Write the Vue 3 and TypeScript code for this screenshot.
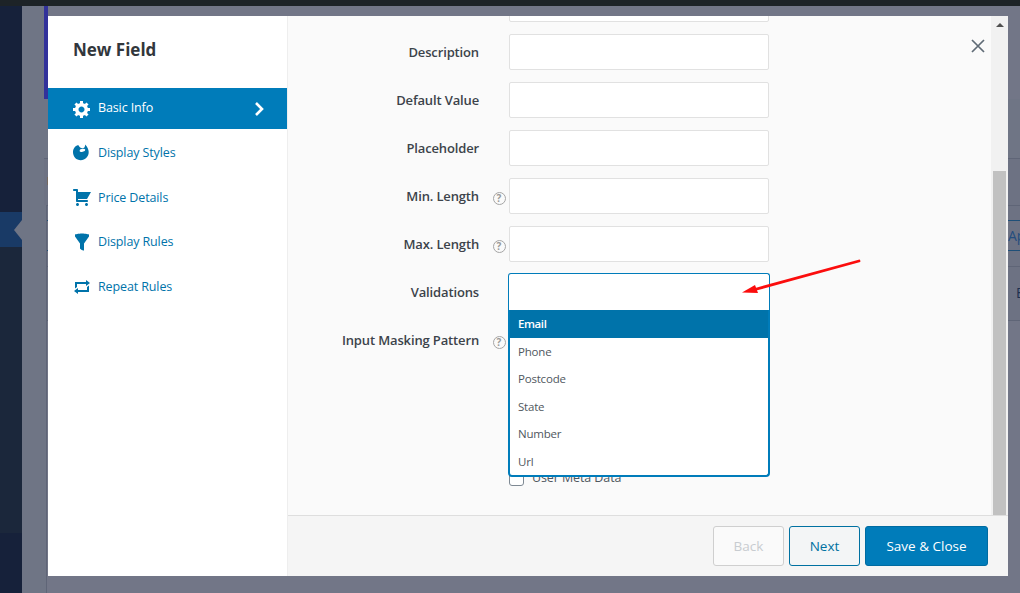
<script setup lang="ts">
interface NavItem { label: string; icon: string; active?: boolean }
interface Row { label: string; help?: boolean }

const navItems: NavItem[] = [
  { label: 'Basic Info', icon: 'gear', active: true },
  { label: 'Display Styles', icon: 'art' },
  { label: 'Price Details', icon: 'cart' },
  { label: 'Display Rules', icon: 'filter' },
  { label: 'Repeat Rules', icon: 'repeat' },
]
const paths: Record<string, string> = {
  gear: 'M18 12h-2.18c-.17.7-.44 1.35-.81 1.93l1.54 1.54-2.1 2.1-1.54-1.54c-.58.36-1.23.63-1.91.79V19H8v-2.18c-.68-.16-1.33-.43-1.91-.79l-1.54 1.54-2.12-2.12 1.54-1.54c-.36-.58-.63-1.23-.79-1.91H1V9.03h2.17c.16-.7.44-1.35.8-1.94L2.43 5.55l2.1-2.1 1.54 1.54c.58-.37 1.24-.64 1.93-.81V2h3v2.18c.68.16 1.33.43 1.91.79l1.54-1.54 2.12 2.12-1.54 1.54c.36.59.64 1.24.8 1.94H18V12zm-8.5 1.5c1.66 0 3-1.34 3-3s-1.34-3-3-3-3 1.34-3 3 1.34 3 3 3z',
  art: 'M6.200 3C2.900 3.900 1 6.900 1 10.200c0 4.400 3.400 8 7.700 8 4.600 0 8-3.700 8-8.200 0-2.300-1.300-5.300-3.600-7.500.1 1.800-.5 3.300-1.700 3.600-1.100.3-2.400-.2-3.300-.6C7.300 4.600 6.800 3.700 6.200 3z',
  cart: 'M6 13h9c.55 0 1 .45 1 1s-.45 1-1 1H5c-.55 0-1-.45-1-1V4H2c-.55 0-1-.45-1-1s.45-1 1-1h3c.55 0 1 .45 1 1v2h13l-4 7H6v1zm-.5 3c.83 0 1.5.67 1.5 1.5S6.33 19 5.5 19 4 18.33 4 17.5 4.67 16 5.5 16zm9 0c.83 0 1.5.67 1.5 1.5s-.67 1.5-1.5 1.500-1.500-.67-1.500-1.500.67-1.500 1.500-1.500z',
  filter: 'M3 4.5v-2s3.34-1 7-1 7 1 7 1v2l-5 7.03v6.97s-1.22-.09-2.25-.59S8 16.5 8 16.5v-4.97z',
  repeat: 'M5 7v3l-2 1.500V5h11V3l4 3.010L14 9V7H5zm10 6v-3l2-1.500V15H6v2l-4-3.010L6 11v2h9z',
}
const rows: Row[] = [
  { label: '' },
  { label: 'Description' },
  { label: 'Default Value' },
  { label: 'Placeholder' },
  { label: 'Min. Length', help: true },
  { label: 'Max. Length', help: true },
]
const options: string[] = ['Email', 'Phone', 'Postcode', 'State', 'Number', 'Url']
</script>

<template>
  <div class="page">
    <div class="adminbar"></div>
    <div class="wp">
      <aside class="wp-side">
        <div class="wp-side-active"><i class="notch"></i></div>
        <div class="wp-side-low"></div>
      </aside>
      <main class="wp-main">
        <div class="banner"></div>
        <div class="strip strip-a"></div>
        <div class="strip strip-b"><i class="tag"></i></div>
        <div class="tabs">
          <div class="tab-gap"></div>
          <div class="tab-active">Ap</div>
          <div class="tab-rest"></div>
          <div class="tab-row">E</div>
          <div class="tab-fill"></div>
        </div>
      </main>
    </div>

    <div class="modal">
      <nav class="side">
        <h2 class="title">New Field</h2>
        <ul class="nav">
          <li v-for="item in navItems" :key="item.label" class="nav-item" :class="{ active: item.active }">
            <svg class="nav-icon" viewBox="0 0 20 20" width="20" height="20" fill="currentColor">
              <path :d="paths[item.icon]" />
              <ellipse v-if="item.icon === 'art'" cx="10.4" cy="8.300" rx="2.900" ry="1.500" transform="rotate(-12 10.400 8.300)" fill="#fff" />
            </svg>
            <span class="nav-label">{{ item.label }}</span>
            <svg v-if="item.active" class="chev" viewBox="0 0 10 16" width="10" height="16" fill="none" stroke="#fff" stroke-width="2.6">
              <path d="M2 2l6 6-6 6" />
            </svg>
          </li>
        </ul>
      </nav>

      <section class="content">
        <div class="scroller">
          <div class="form-wrap">
            <div class="form">
              <div v-for="row in rows" :key="row.label" class="row">
                <label class="lab">{{ row.label }}</label>
                <span class="help-slot"><span v-if="row.help" class="help">?</span></span>
                <input class="inp" type="text" />
              </div>
              <div class="row">
                <label class="lab">Validations</label>
                <span class="help-slot"></span>
                <div class="select">
                  <div class="select-box"></div>
                  <ul class="menu">
                    <li v-for="(o, i) in options" :key="o" class="opt" :class="{ sel: i === 0 }">{{ o }}</li>
                  </ul>
                </div>
              </div>
              <div class="row">
                <label class="lab">Input Masking Pattern</label>
                <span class="help-slot"><span class="help">?</span></span>
                <span class="mask-slot"></span>
              </div>
              <div class="row check-row">
                <span class="lab"></span>
                <span class="help-slot"></span>
                <label class="check"><input type="checkbox" class="cb" /><span class="check-text">User Meta Data</span></label>
              </div>
            </div>
            <button class="close" aria-label="Close">
              <svg viewBox="0 0 14 14" width="14" height="14" fill="none" stroke="#5f6b76" stroke-width="1.7"><path d="M1 1l12 12M13 1L1 13" /></svg>
            </button>
          </div>
          <div class="scrollbar">
            <div class="sb-up"><i class="tri"></i></div>
            <div class="sb-thumb"></div>
          </div>
        </div>
        <footer class="foot">
          <button class="btn back">Back</button>
          <button class="btn next">Next</button>
          <button class="btn save">Save &amp; Close</button>
        </footer>
      </section>
    </div>

    <svg class="arrow" viewBox="0 0 130 44" width="130" height="44">
      <path d="M118 2L12 31" stroke="#fb0d0d" stroke-width="2.800" stroke-linecap="round" fill="none" />
      <path d="M1 33.500L14 26L17 34z" fill="#fb0d0d" />
    </svg>
  </div>
</template>

<style>
html, body { margin: 0; padding: 0; }
</style>

<style scoped>
* { box-sizing: border-box; }
.page {
  position: relative;
  width: 1020px;
  height: 593px;
  overflow: hidden;
  background: #727687;
  font-family: "Open Sans", "Noto Sans", sans-serif;
  display: flex;
  flex-direction: column;
}
.adminbar { height: 6px; flex: none; background: #1d2327; }
.wp { flex: 1; display: flex; min-height: 0; }
.wp-side { width: 22px; flex: none; background: #16213a; padding-top: 206px; display: flex; flex-direction: column; }
.wp-side-active { height: 35px; background: #193a66; display: flex; align-items: center; justify-content: flex-end; flex: none; }
.notch { width: 0; height: 0; border-style: solid; border-width: 10px 8px 10px 0; border-color: transparent #6f7585 transparent transparent; }
.wp-side-low { height: 286px; background: #1b273b; flex: none; }
.wp-main { flex: 1; background: #6f7585; min-width: 0; display: flex; flex-direction: column; }
.banner { height: 93px; flex: none; background: #727687; margin-left: 22px; border-left: 4px solid #32329a; }
.strip { flex: none; border-bottom: 1px solid #5f6577; margin-left: 22px; }
.strip-a { height: 60px; }
.strip-b { height: 46px; border-bottom: none; padding: 18px 0 0 3px; background: #6d7283; }
.tag { display: block; width: 3px; height: 8px; background: #766a60; }
.tabs { flex: 1; min-height: 0; margin-left: 24px; border-left: 1px solid #5f6577; display: flex; flex-direction: column; color: #1d2f4f; font-size: 14px; background: #6d7283; }
.tab-gap { height: 15px; flex: none; border-top: 1px solid #5f6577; }
.tab-active { height: 31px; flex: none; border-top: 1px solid #1f4f78; border-bottom: 1px solid #1f4f78; line-height: 29px; color: #244d7e; padding-left: 961px; white-space: nowrap; overflow: hidden; }
.tab-rest { height: 16px; flex: none; border-bottom: 1px solid #5f6577; }
.tab-row { height: 54px; flex: none; border-bottom: 1px solid #5f6577; line-height: 52px; padding-left: 969px; }
.tab-fill { flex: 1; background: #727687; }

.modal {
  position: absolute;
  left: 48px;
  top: 16px;
  width: 960px;
  height: 560px;
  display: flex;
  background: #fff;
}
.side { width: 240px; flex: none; background: #fff; border-right: 1px solid #eee; }
.title { margin: 0; padding: 21px 0 0 25px; height: 72px; font-size: 17px; line-height: 26px; font-weight: 700; color: #32373c; }
.nav { list-style: none; margin: 0; padding: 0; }
.nav-item { height: 44.75px; display: flex; align-items: center; padding-left: 24px; color: #0073aa; font-size: 12.5px; letter-spacing: -0.12px; }
.nav-item.active { height: 41px; margin-bottom: 1px; background: #007cba; color: #fff; }
.nav-icon { flex: none; margin-right: 6px; }
.nav-label { flex: 1; }
.active .nav-label { margin-top: -2px; }
.chev { margin-right: 23px; flex: none; }

.content { flex: 1; min-width: 0; display: flex; flex-direction: column; background: #f5f5f5; }
.scroller { flex: 1; min-height: 0; display: flex; background: #fafafa; overflow: hidden; }
.form-wrap { flex: 1; position: relative; overflow: hidden; }
.form { margin-top: -30px; display: flex; flex-direction: column; gap: 12px; }
.row { display: flex; align-items: center; height: 36px; flex: none; }
.lab { width: 191px; text-align: right; font-size: 13px; letter-spacing: -0.14px; font-weight: 600; color: #3c434a; flex: none; }
.help-slot { width: 30px; flex: none; display: flex; justify-content: center; }
.help { width: 13px; height: 13px; margin-top: 4px; margin-left: 10px; border: 1.5px solid #a5a5a5; border-radius: 50%; color: #999; font-size: 10px; font-weight: 700; line-height: 10px; text-align: center; }
.inp { width: 260px; height: 36px; border: 1px solid #e1e1e1; border-radius: 2px; background: #fff; padding: 0; margin: 0; outline: none; }
.mask-slot { width: 260px; height: 36px; }
.select { width: 262px; margin-left: -1px; position: relative; height: 38px; }
.select-box { height: 38px; border: 1px solid #007cba; border-bottom: none; border-radius: 3px 3px 0 0; background: #fff; }
.menu {
  position: absolute;
  left: 0;
  top: 37px;
  width: 262px;
  list-style: none;
  margin: 0;
  padding: 0;
  background: #fff;
  border: 2px solid #007cba;
  border-top: none;
  border-radius: 0 0 4px 4px;
  z-index: 2;
}
.opt { height: 27.5px; padding-left: 8px; font-size: 11.5px; letter-spacing: -0.2px; line-height: 27.5px; color: #50575e; }
.opt.sel { background: #0073aa; color: #fff; font-weight: 600; letter-spacing: -0.4px; }
.check-row { margin-top: 96px; height: 24px; }
.check { display: flex; align-items: center; font-size: 12.5px; letter-spacing: -0.1px; color: #50575e; }
.check-text { margin-top: -2px; }
.cb { appearance: none; width: 15px; height: 15px; margin: 0 8px 0 0; border: 1px solid #7e8993; border-radius: 3px; background: #fff; }
.close { position: absolute; top: 23px; right: 6px; padding: 0; border: none; background: none; display: flex; }

.scrollbar { width: 17px; flex: none; background: #f1f1f1; padding: 0 2px 0 2px; display: flex; flex-direction: column; }
.sb-up { height: 155px; flex: none; display: flex; justify-content: center; padding-top: 7px; }
.tri { width: 0; height: 0; border: 4px solid transparent; border-bottom: 4px solid #505050; border-top: none; }
.sb-thumb { flex: 1; background: #c1c1c1; }

.foot { height: 61px; flex: none; border-top: 1px solid #dedede; background: #f5f5f5; display: flex; justify-content: flex-end; align-items: flex-start; padding: 10px 20px 0 0; gap: 5px; }
.btn { height: 40px; width: 71px; border-radius: 3px; font-family: inherit; font-size: 13.5px; padding: 0; }
.back { background: #fafafa; border: 1px solid #cfcfcf; color: #c8ccd0; }
.next { background: #f3f5f6; border: 1px solid #0071a1; color: #0071a1; }
.save { width: 123px; background: #007cba; border: 1px solid #006ba1; color: #fff; }

.arrow { position: absolute; left: 741px; top: 259px; z-index: 3; pointer-events: none; }
</style>
